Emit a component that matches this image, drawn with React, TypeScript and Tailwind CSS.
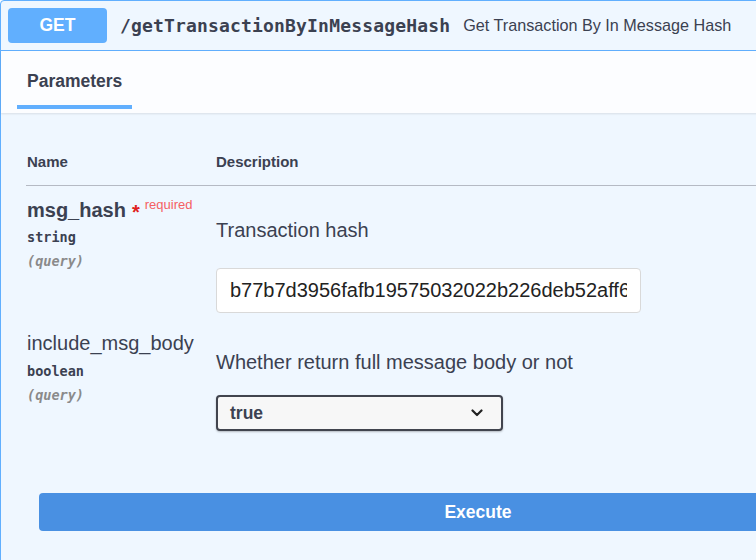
const sans = { fontFamily: '"Liberation Sans", Arial, sans-serif' };

function Chevron() {
  return (
    <svg width="12" height="8" viewBox="0 0 12 8" fill="none">
      <path d="M1.5 1.5L6 6L10.5 1.5" stroke="#222" strokeWidth="2.2" strokeLinecap="round" strokeLinejoin="round" />
    </svg>
  );
}

function ParamName({
  name,
  type,
  required,
}: {
  name: string;
  type: string;
  required?: boolean;
}) {
  return (
    <div className="flex flex-col">
      <div className="flex items-start leading-6 h-6">
        <span className={`text-[20px] text-[#3b4151] ${required ? "font-bold" : ""}`}>{name}</span>
        {required && (
          <>
            <span className="text-[20px] font-bold text-[#e02020] ml-[6px] leading-[28px]">*</span>
            <span className="text-[13px] text-[#f55f63] ml-[5px] leading-[14px]">required</span>
          </>
        )}
      </div>
      <div
        className={`font-bold text-[13.5px] text-[#3b4151] leading-6 ${required ? "mt-[3px]" : "mt-[4px]"}`}
        style={{ fontFamily: '"DejaVu Sans Mono", "Liberation Mono", monospace' }}
      >
        {type}
      </div>
      <div
        className="italic font-bold text-[13.5px] text-[#8a8a8a] leading-6"
        style={{ fontFamily: '"DejaVu Sans Mono", "Liberation Mono", monospace' }}
      >
        (query)
      </div>
    </div>
  );
}

export default function App() {
  return (
    <div className="w-[756px] h-[560px] overflow-hidden bg-white" style={sans}>
      <div className="w-[960px] h-[600px] border border-[#61affe] rounded-[4px] bg-[#eff7ff]">
        {/* summary */}
        <div className="h-[50px] border-b border-[#61affe] flex items-center pl-[7px]">
          <div className="w-[99px] h-[35px] rounded-[4px] bg-[#61affe] text-white font-bold text-[17.5px] flex items-center justify-center">
            GET
          </div>
          <span
            className="ml-[13px] font-bold text-[18px] tracking-[0.17px] text-[#3b4151]"
            style={{ fontFamily: '"DejaVu Sans Mono", "Liberation Mono", monospace' }}
          >
            /getTransactionByInMessageHash
          </span>
          <span className="ml-[13px] text-[16.2px] text-[#3b4151]">Get Transaction By In Message Hash</span>
        </div>

        {/* tabs */}
        <div className="h-[62px] bg-white/80 pt-[19px] pl-4 shadow-[0_1px_2px_rgba(0,0,0,0.1)]">
          <div className="inline-flex flex-col">
            <div className="px-[10px] text-[17.5px] font-bold leading-[22px] text-[#3b4151]">Parameters</div>
            <div className="h-[4px] bg-[#61affe] mt-[13px]" />
          </div>
        </div>

        {/* table */}
        <div className="pl-[25px]">
          <div className="grid grid-cols-[190px_1fr] pt-[40px] pb-[14px] border-b border-[#b5bac4]">
            <div className="pl-[1px] text-[15px] font-bold leading-[18px] text-[#3b4151]">Name</div>
            <div className="text-[15px] font-bold leading-[18px] text-[#3b4151]">Description</div>
          </div>

          <div className="grid grid-cols-[190px_1fr] items-start">
            <div className="pl-[1px] pt-[12px]">
              <ParamName name="msg_hash" type="string" required />
            </div>
            <div className="pt-[32px]">
              <div className="text-[20px] leading-6 text-[#3b4151]">Transaction hash</div>
              <input
                readOnly
                value="b77b7d3956fafb19575032022b226deb52aff6e8d6d5f17b0e4f2c7a9f0ab8f6c"
                className="mt-[26px] w-[425px] h-[45px] rounded-[4px] border border-[#d9d9d9] bg-white px-[13px] text-[20px] text-[#222] outline-none"
              />
            </div>
          </div>

          <div className="grid grid-cols-[190px_1fr] items-start">
            <div className="pl-[1px] pt-[18px]">
              <ParamName name="include_msg_body" type="boolean" />
            </div>
            <div className="pt-[37px]">
              <div className="text-[20px] leading-6 text-[#3b4151]">Whether return full message body or not</div>
              <div className="mt-[21px] w-[287px] h-[36px] rounded-[4px] border-2 border-[#41444e] bg-[#f7f7f7] shadow-[0_1px_2px_rgba(0,0,0,0.25)] flex items-center justify-between pl-[12px] pr-[18px]">
                <span className="text-[17.5px] font-bold text-[#3b4151]">true</span>
                <Chevron />
              </div>
            </div>
          </div>
        </div>

        {/* execute */}
        <div className="pl-[38px] pt-[62px]">
          <button className="w-[878px] h-[38px] rounded-[4px] bg-[#4990e2] text-white font-bold text-[17.5px]">
            Execute
          </button>
        </div>
      </div>
    </div>
  );
}
